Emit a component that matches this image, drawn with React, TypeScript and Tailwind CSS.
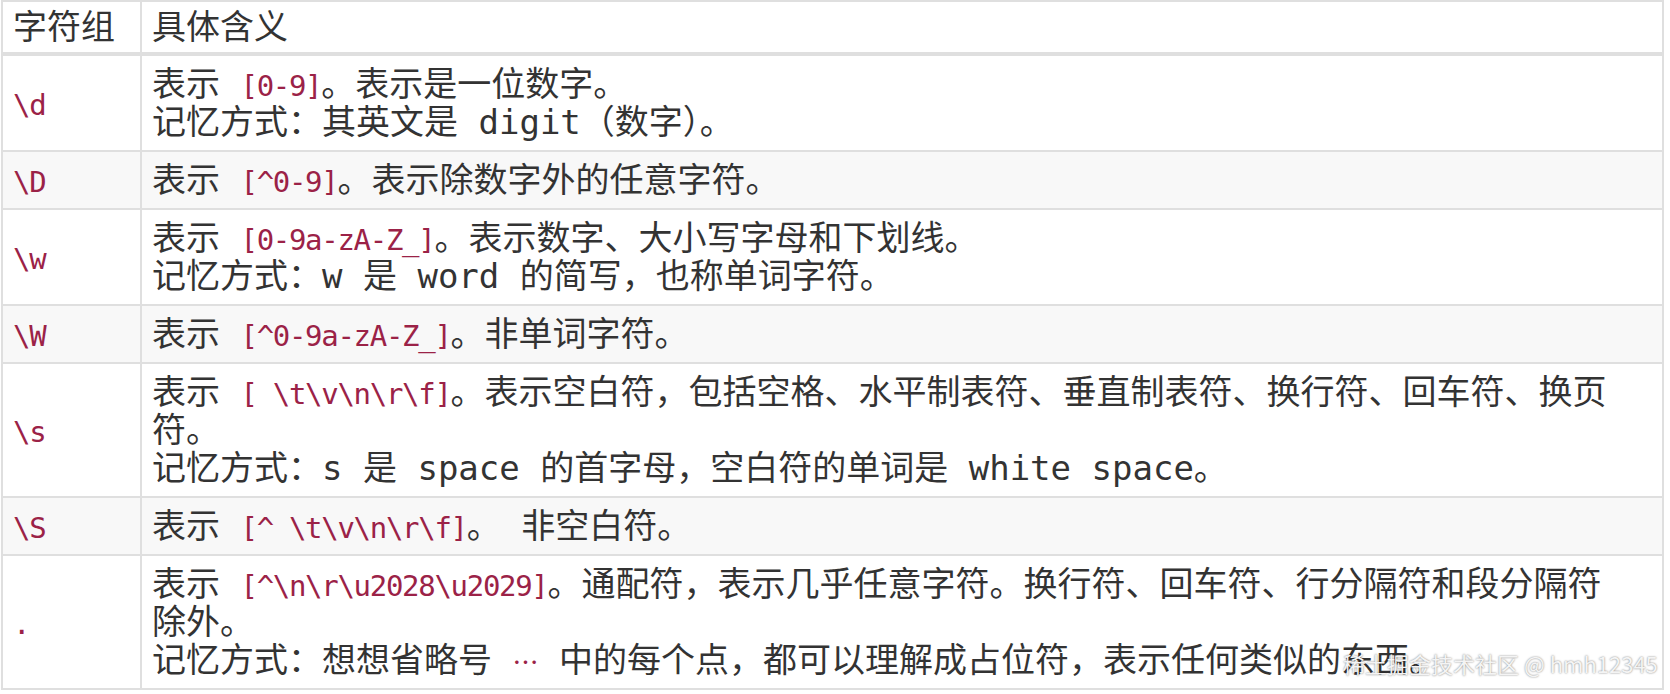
import type { ReactNode } from "react";

// Regex character-class reference table
type Part = string | { code: string; cjk?: boolean };
type Row = { key: string; lines: Part[][]; striped?: boolean };

const ROWS: Row[] = [
  {
    key: "\\d",
    lines: [
      ["表示 ", { code: "[0-9]" }, "。表示是一位数字。"],
      ["记忆方式：其英文是 digit（数字）。"],
    ],
  },
  {
    key: "\\D",
    striped: true,
    lines: [["表示 ", { code: "[^0-9]" }, "。表示除数字外的任意字符。"]],
  },
  {
    key: "\\w",
    lines: [
      ["表示 ", { code: "[0-9a-zA-Z_]" }, "。表示数字、大小写字母和下划线。"],
      ["记忆方式：w 是 word 的简写，也称单词字符。"],
    ],
  },
  {
    key: "\\W",
    striped: true,
    lines: [["表示 ", { code: "[^0-9a-zA-Z_]" }, "。非单词字符。"]],
  },
  {
    key: "\\s",
    lines: [
      [
        "表示 ",
        { code: "[ \\t\\v\\n\\r\\f]" },
        "。表示空白符，包括空格、水平制表符、垂直制表符、换行符、回车符、换页",
      ],
      ["符。"],
      ["记忆方式：s 是 space 的首字母，空白符的单词是 white space。"],
    ],
  },
  {
    key: "\\S",
    striped: true,
    lines: [["表示 ", { code: "[^ \\t\\v\\n\\r\\f]" }, "。 非空白符。"]],
  },
  {
    key: ".",
    lines: [
      [
        "表示 ",
        { code: "[^\\n\\r\\u2028\\u2029]" },
        "。通配符，表示几乎任意字符。换行符、回车符、行分隔符和段分隔符",
      ],
      ["除外。"],
      [
        "记忆方式：想想省略号 ",
        { code: "…", cjk: true },
        " 中的每个点，都可以理解成占位符，表示任何类似的东西。",
      ],
    ],
  },
];

function Code({ children, cjk }: { children: ReactNode; cjk?: boolean }) {
  return (
    <code
      className={
        cjk
          ? "font-['Noto_Sans_CJK_SC',sans-serif] text-[26px] leading-none text-[#9b2247]"
          : "font-['DejaVu_Sans_Mono','Noto_Sans_CJK_SC',monospace] text-[29px] leading-none tracking-[-1.3px] text-[#9b2247]"
      }
    >
      {children}
    </code>
  );
}

export default function App() {
  return (
    <div className="relative w-[1670px] h-[694px] bg-white pl-[1px] font-['DejaVu_Sans_Mono','Noto_Sans_CJK_SC',monospace] text-[34px] leading-[38px] text-[#333]">
      <table className="w-[1663px] table-fixed border-collapse">
        <colgroup>
          <col className="w-[139px]" />
          <col />
        </colgroup>
        <thead>
          <tr className="bg-white">
            <th className="border-2 border-b-4 border-[#dfdfdf] px-[10px] py-[6px] text-left font-normal">
              <div className="h-[38px] whitespace-nowrap">字符组</div>
            </th>
            <th className="border-2 border-b-4 border-[#dfdfdf] px-[10px] py-[6px] text-left font-normal">
              <div className="h-[38px] whitespace-nowrap">具体含义</div>
            </th>
          </tr>
        </thead>
        <tbody>
          {ROWS.map((row) => (
            <tr key={row.key} className={row.striped ? "bg-[#f8f8f8]" : "bg-white"}>
              <td className="border-2 border-[#dfdfdf] px-[10px] py-[9px] align-middle">
                <div className="h-[38px] whitespace-nowrap">
                  <Code>{row.key}</Code>
                </div>
              </td>
              <td className="border-2 border-[#dfdfdf] px-[10px] py-[9px]">
                {row.lines.map((line, i) => (
                  <div key={i} className="h-[38px] whitespace-nowrap">
                    {line.map((part, j) =>
                      typeof part === "string" ? (
                        <span key={j}>{part}</span>
                      ) : (
                        <Code key={j} cjk={part.cjk}>
                          {part.code}
                        </Code>
                      )
                    )}
                  </div>
                ))}
              </td>
            </tr>
          ))}
        </tbody>
      </table>

      {/* site watermark */}
      <div className="absolute left-[1343px] top-[648px] font-['Noto_Sans_CJK_SC','Noto_Sans',sans-serif] text-[22px] leading-[30px] text-[#f4f4f4] [text-shadow:0_0_2px_rgba(0,0,0,0.55)]">
        稀土掘金技术社区 @ hmh12345
      </div>
    </div>
  );
}
